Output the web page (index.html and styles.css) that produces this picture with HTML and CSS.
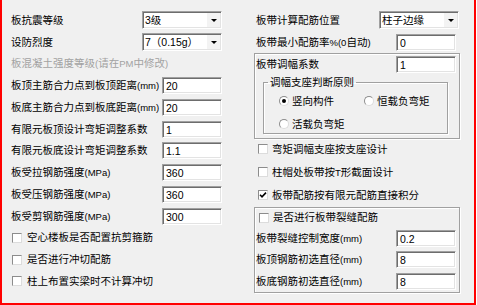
FILE: index.html
```html
<!DOCTYPE html>
<html>
<head>
<meta charset="utf-8">
<link rel="stylesheet" href="styles.css">
</head>
<body>
<div class="frame">
  <div class="col left">
    <div class="row"><span class="lbl">板抗震等级</span><div class="select"><span class="val">3级</span><span class="btn"><i class="tri"></i></span></div></div>
    <div class="row"><span class="lbl">设防烈度</span><div class="select"><span class="val">7（0.15g）</span><span class="btn"><i class="tri"></i></span></div></div>
    <div class="row"><span class="lbl dis">板混凝土强度等级<span class="u">(</span>请在<span class="u">PM</span>中修改<span class="u">)</span></span></div>
    <div class="row"><span class="lbl">板顶主筋合力点到板顶距离<span class="u">(mm)</span></span><div class="input">20</div></div>
    <div class="row"><span class="lbl">板底主筋合力点到板底距离<span class="u">(mm)</span></span><div class="input">20</div></div>
    <div class="row"><span class="lbl">有限元板顶设计弯矩调整系数</span><div class="input">1</div></div>
    <div class="row"><span class="lbl">有限元板底设计弯矩调整系数</span><div class="input">1.1</div></div>
    <div class="row"><span class="lbl">板受拉钢筋强度<span class="u">(MPa)</span></span><div class="input">360</div></div>
    <div class="row"><span class="lbl">板受压钢筋强度<span class="u">(MPa)</span></span><div class="input">360</div></div>
    <div class="row"><span class="lbl">板受剪钢筋强度<span class="u">(MPa)</span></span><div class="input">300</div></div>
    <div class="row cbrow"><span class="cb"></span><span class="lbl">空心楼板是否配置抗剪箍筋</span></div>
    <div class="row cbrow"><span class="cb"></span><span class="lbl">是否进行冲切配筋</span></div>
    <div class="row cbrow"><span class="cb"></span><span class="lbl">柱上布置实梁时不计算冲切</span></div>
  </div>

  <div class="col right">
    <div class="row out sel"><span class="lbl">板带计算配筋位置</span><div class="select"><span class="val">柱子边缘</span><span class="btn"><i class="tri"></i></span></div></div>
    <div class="row out"><span class="lbl">板带最小配筋率<span class="u">%(0</span>自动<span class="u">)</span></span><div class="input">0</div></div>

    <div class="group g1">
      <div class="row r20"><span class="lbl">板带调幅系数</span><div class="input">1</div></div>
      <fieldset class="inner">
        <legend>调幅支座判断原则</legend>
        <div class="rrow first"><span class="radio wide"><span class="dot on"></span><span class="lbl">竖向构件</span></span><span class="radio"><span class="dot"></span><span class="lbl">恒载负弯矩</span></span></div>
        <div class="rrow"><span class="radio"><span class="dot"></span><span class="lbl">活载负弯矩</span></span></div>
      </fieldset>
    </div>

    <div class="checks">
      <div class="crow"><span class="cb"></span><span class="lbl">弯矩调幅支座按支座设计</span></div>
      <div class="crow"><span class="cb"></span><span class="lbl">柱帽处板带按<span class="u">T</span>形截面设计</span></div>
      <div class="crow"><span class="cb checked"><svg width="8" height="8" viewBox="0 0 8 8"><polyline points="1,3.8 3,5.8 7,1.6" fill="none" stroke="#000" stroke-width="1.6"/></svg></span><span class="lbl">板带配筋按有限元配筋直接积分</span></div>
    </div>

    <div class="group g2">
      <div class="crow top"><span class="cb"></span><span class="lbl">是否进行板带裂缝配筋</span></div>
      <div class="row r215"><span class="lbl">板带裂缝控制宽度<span class="u">(mm)</span></span><div class="input">0.2</div></div>
      <div class="row r215"><span class="lbl">板顶钢筋初选直径<span class="u">(mm)</span></span><div class="input">8</div></div>
      <div class="row r215"><span class="lbl">板底钢筋初选直径<span class="u">(mm)</span></span><div class="input">8</div></div>
    </div>
  </div>
</div>
</body>
</html>
```
FILE: styles.css
```css
* { box-sizing: border-box; }
html, body { margin: 0; padding: 0; }
body {
  background: #fff;
  font-family: "Liberation Sans", "Noto Sans CJK SC", sans-serif;
  font-size: 10.5px;
  color: #000;
}
.frame {
  width: 476px;
  height: 305px;
  background: #f0f0f0;
  border: 2px solid #f00;
  border-top: 0;
  display: flex;
  align-items: flex-start;
}
.col { display: flex; flex-direction: column; }
.left { width: 220px; padding: 9.6px 0 0 9px; }
.right { width: 206px; margin-left: 32px; padding-top: 9.6px; }

.row {
  display: flex;
  align-items: center;
  justify-content: space-between;
  height: 21.75px;
}
.lbl { white-space: nowrap; line-height: 13px; }
.u { font-size: 9.5px; }
.dis { color: #a2a2a2; }

.select {
  width: 80px;
  height: 18px;
  background: #fff;
  border: 1px solid;
  border-color: #a0a0a0 #fff #fff #a0a0a0;
  box-shadow: inset 1px 1px 0 #6d6d6d, inset -1px -1px 0 #e3e3e3;
  display: flex;
  align-items: stretch;
}
.select .val { flex: 1; padding: 1px 0 0 2px; line-height: 14px; white-space: nowrap; }
.select .btn {
  width: 13px;
  margin: 1px 1px 1px 0;
  background: #f3f3f3;
  display: flex;
  align-items: center;
  justify-content: center;
}
.tri {
  width: 0; height: 0;
  border-left: 3px solid transparent;
  border-right: 3px solid transparent;
  border-top: 3px solid #000;
}

.input {
  width: 60px;
  height: 17px;
  background: #fff;
  border: 1px solid;
  border-color: #a0a0a0 #fff #fff #a0a0a0;
  box-shadow: inset 1px 1px 0 #6d6d6d, inset -1px -1px 0 #e3e3e3;
  padding: 1px 0 0 3px;
  line-height: 14px;
}

.cb {
  width: 10px;
  height: 10px;
  flex: none;
  background: #fff;
  border: 1px solid;
  border-color: #8c8c8c #dcdcdc #dcdcdc #8c8c8c;
  display: flex;
  align-items: center;
  justify-content: center;
}
.cb svg { display: block; }
.cbrow { justify-content: flex-start; gap: 5px; padding-left: 1px; }

/* right column */
.out { padding-left: 2px; padding-right: 4px; }
.out.sel { padding-right: 1px; }

.group {
  border: 1px solid #a0a0a0;
  box-shadow: 1px 1px 0 #fff, inset 1px 1px 0 #fff;
}
.g1 { padding: 0 3px 0 1px; }
.r20 { height: 20px; }

.inner {
  margin: 1px 8px 4px 7px;
  border: 1px solid #a0a0a0;
  box-shadow: 1px 1px 0 #fff, inset 1px 1px 0 #fff;
  padding: 0 0 1px 4px;
  min-width: 0;
}
.inner legend {
  padding: 0 2px;
  line-height: 14px;
  height: 14px;
  white-space: nowrap;
}
.rrow {
  display: flex;
  align-items: center;
  height: 16px;
  margin-left: 11px;
  margin-top: 7px;
}
.rrow.first { margin-top: 4px; }
.radio { display: flex; align-items: center; gap: 3px; }
.radio.wide { width: 85px; }
.dot {
  width: 10px;
  height: 10px;
  border-radius: 50%;
  background: #fff;
  border: 1px solid;
  border-color: #8c8c8c #dcdcdc #dcdcdc #8c8c8c;
  display: flex;
  align-items: center;
  justify-content: center;
}
.dot.on::after {
  content: "";
  width: 4px;
  height: 4px;
  border-radius: 50%;
  background: #000;
}

.checks {
  display: flex;
  flex-direction: column;
  gap: 5px;
  margin-top: 1px;
  padding-left: 4px;
}
.crow { display: flex; align-items: center; gap: 4px; height: 18px; }

.g2 { margin-top: 3px; padding: 0 3px 0 1px; }
.crow.top { height: 19.5px; padding-left: 3px; }
.r215 { height: 21.5px; }
```
